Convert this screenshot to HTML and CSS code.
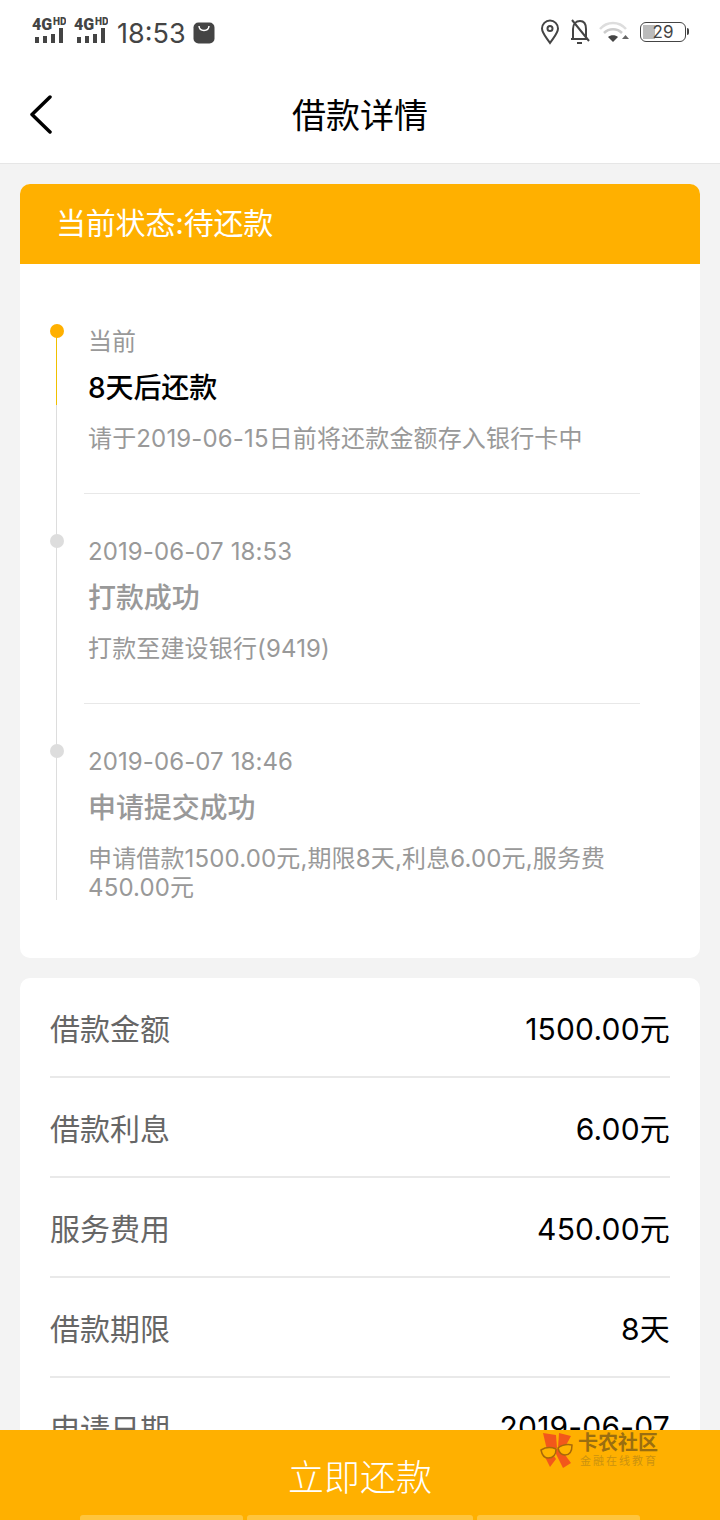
FILE: index.html
```html
<!DOCTYPE html>
<html lang="zh-CN">
<head>
<meta charset="utf-8">
<title>借款详情</title>
<link rel="stylesheet" href="styles.css">
</head>
<body>
<div class="screen">
  <div class="statusbar">
    <div class="sb-left">
      <svg class="sig" width="34" height="32" viewBox="0 -6 34 32"><text x="0" y="12" class="sig-4g">4G</text><text x="21" y="7" class="sig-hd">HD</text><rect x="3" y="19" width="4" height="6"/><rect x="11" y="18" width="4" height="7"/><rect x="19" y="16" width="4" height="9"/><rect x="27" y="10" width="4" height="15"/></svg>
      <svg class="sig" width="34" height="32" viewBox="0 -6 34 32"><text x="0" y="12" class="sig-4g">4G</text><text x="21" y="7" class="sig-hd">HD</text><rect x="3" y="19" width="4" height="6"/><rect x="11" y="18" width="4" height="7"/><rect x="19" y="16" width="4" height="9"/><rect x="27" y="10" width="4" height="15"/></svg>
      <span class="time">18:53</span>
      <svg class="bag" width="22" height="22" viewBox="0 0 22 22"><rect width="21" height="21" x="0.5" y="0.5" rx="5" fill="#444"/><path d="M6 4c.5 6 9.500 6 10 0" fill="none" stroke="#fff" stroke-width="1.500"/></svg>
    </div>
    <div class="sb-right">
      <svg width="20" height="26" viewBox="0 0 20 26"><path d="M10 24C6 18 2 14 2 9.500a8 8 0 0 1 16 0C18 14 14 18 10 24z" fill="none" stroke="#444" stroke-width="2"/><circle cx="10" cy="9.500" r="2.500" fill="none" stroke="#444" stroke-width="2"/></svg>
      <svg width="22" height="26" viewBox="0 0 22 26"><path d="M2 20h17M4 20V10c0-5 3-8 7-8s6 3 6 8v10M8 24h5M3 1l17 21" fill="none" stroke="#444" stroke-width="2"/></svg>
      <svg class="wifi" width="30" height="24" viewBox="0 0 30 24"><path d="M1 9c7-8 19-8 26 0" fill="none" stroke="#ddd" stroke-width="2.500"/><path d="M5 13c5-5 13-5 18 0" fill="none" stroke="#ccc" stroke-width="2.500"/><path d="M9 17c2.500-2.500 7.500-2.500 10 0l-5 5z" fill="#444"/><path d="M23 19l3.500-4 3.500 4z" fill="#666"/></svg>
      <div class="battery"><span class="batt-fill"></span><span class="batt-num">29</span></div>
    </div>
  </div>

  <header class="navbar">
    <svg class="back" width="24" height="40" viewBox="0 0 24 40"><path d="M21 3L3 20.500 21 38" fill="none" stroke="#000" stroke-width="3.500" stroke-linecap="round" stroke-linejoin="round"/></svg>
    <h1 class="nav-title">借款详情</h1>
  </header>

  <main class="content">
    <section class="status-card">
      <div class="status-head">当前状态:待还款</div>
      <div class="timeline">
        <div class="tl-item tl-current">
          <div class="tl-time">当前</div>
          <div class="tl-title">8天后还款</div>
          <div class="tl-desc">请于2019-06-15日前将还款金额存入银行卡中</div>
        </div>
        <div class="tl-item">
          <div class="tl-time">2019-06-07 18:53</div>
          <div class="tl-title">打款成功</div>
          <div class="tl-desc">打款至建设银行(9419)</div>
        </div>
        <div class="tl-item tl-last">
          <div class="tl-time">2019-06-07 18:46</div>
          <div class="tl-title">申请提交成功</div>
          <div class="tl-desc">申请借款1500.00元,期限8天,利息6.00元,服务费450.00元</div>
        </div>
      </div>
    </section>

    <section class="info-card">
      <div class="info-row"><span class="info-key">借款金额</span><span class="info-val">1500.00元</span></div>
      <div class="info-row"><span class="info-key">借款利息</span><span class="info-val">6.00元</span></div>
      <div class="info-row"><span class="info-key">服务费用</span><span class="info-val">450.00元</span></div>
      <div class="info-row"><span class="info-key">借款期限</span><span class="info-val">8天</span></div>
      <div class="info-row"><span class="info-key">申请日期</span><span class="info-val">2019-06-07</span></div>
    </section>
  </main>

  <footer class="footer">
    <div class="repay">立即还款</div>
    <div class="slivers"><span class="sliver s1"></span><span class="sliver s2"></span><span class="sliver s3"></span></div>
    <div class="watermark">
      <svg class="wm-logo" width="36" height="36" viewBox="0 0 36 36"><path d="M4 1l13 2 1 13-10 2z" fill="#f2581b"/><path d="M20 1l12 3-7 13-6-1z" fill="#f2581b"/><path d="M15 18l6-2 11 15-8 5z" fill="#f2581b"/><path d="M12 20l5 7-6 8-5-10z" fill="#f2581b"/><path d="M2 18c5-3 10-3 15-1 0 6-3 9-8 9-4 0-6-3-7-8z" fill="#ffb400" stroke="#a8690a" stroke-width="1.500"/><path d="M19 16c4-3 9-4 14-3 0 6-2 10-7 10-4 0-6-3-7-7z" fill="#ffb400" stroke="#a8690a" stroke-width="1.500"/></svg>
      <div class="wm-text"><div class="wm-name">卡农社区</div><div class="wm-sub">金融在线教育</div></div>
    </div>
  </footer>
</div>
</body>
</html>
```
FILE: styles.css
```css
* { box-sizing: border-box; }
html, body { margin: 0; padding: 0; }
body { font-family: Inter, "Noto Sans CJK SC", sans-serif; background: #f3f3f3; }
.screen { position: relative; width: 720px; height: 1520px; overflow: hidden; background: #f3f3f3; }

.statusbar { height: 64px; background: #fff; display: flex; justify-content: space-between; align-items: center; padding: 0 34px 2px 32px; }
.sb-left, .sb-right { display: flex; align-items: center; }
.sb-left { gap: 8px; }
.sb-right { gap: 9px; margin-top: 2px; }
.wifi { margin-left: -1px; margin-right: 2px; }
.sig { fill: #444; margin-top: -6px; }
.sig-4g { font: 900 16px Roboto, sans-serif; }
.sig-hd { font: 900 10px Roboto, sans-serif; }
.time { font-size: 27px; color: #444; margin: 4px 0 0 1px; }
.bag { margin-top: 4px; margin-left: -1px; }
.battery { position: relative; width: 46px; height: 20px; border: 1.500px solid #444; border-radius: 6px; display: flex; align-items: center; justify-content: center; }
.battery::after { content: ""; position: absolute; right: -4px; top: 5px; width: 2px; height: 7px; background: #444; border-radius: 0 2px 2px 0; }
.batt-fill { position: absolute; left: 2px; top: 2px; bottom: 2px; width: 12px; background: #bbb; }
.batt-num { position: relative; font-size: 17px; color: #444; }

.navbar { position: relative; height: 100px; background: #fff; border-bottom: 1px solid #e6e6e6; display: flex; align-items: center; justify-content: center; }
.back { position: absolute; left: 29px; top: 30px; }
.nav-title { margin: 0; font-size: 34px; font-weight: 400; color: #000; }

.content { padding: 20px 20px 0; display: flex; flex-direction: column; gap: 20px; }

.status-card { background: #fff; border-radius: 10px; overflow: hidden; }
.status-head { height: 80px; background: #ffb000; color: #fff; font-size: 30px; line-height: 78px; padding-left: 36px; letter-spacing: -0.2px; }
.timeline { padding: 60px 60px 58px 68px; position: relative; }
.tl-item { position: relative; height: 210px; }
.tl-item::before { content: ""; position: absolute; left: -38px; top: 0; width: 14px; height: 14px; border-radius: 50%; background: #ddd; z-index: 1; }
.tl-item::after { content: ""; position: absolute; left: -32px; top: 7px; bottom: -7px; width: 1px; background: #ddd; }
.tl-current::before { background: #ffb000; }
.tl-current::after { background: linear-gradient(#f0c000 0 74px, #ddd 74px); }
.tl-last { height: 156px; }
.tl-last::after { bottom: 0; }
.tl-time { font-size: 24px; line-height: 35px; color: #999; letter-spacing: 0.1px; }
.tl-title { font-size: 28px; font-weight: 500; line-height: 40px; margin-top: 9px; color: #999; letter-spacing: -0.1px; }
.tl-current .tl-title { color: #000; }
.tl-desc { font-size: 24px; line-height: 29px; color: #999; margin-top: 16px; letter-spacing: 0.15px; }
.tl-item:not(.tl-last) .tl-desc { padding-bottom: 40px; border-bottom: 1px solid #e8e8e8; margin-left: -4px; padding-left: 4px; }

.info-card { background: #fff; border-radius: 10px; padding: 0 30px; }
.info-row { height: 100px; display: flex; justify-content: space-between; align-items: center; border-bottom: 2px solid #e9e9e9; }
.info-key { font-size: 30px; color: #666; }
.info-val { font-size: 30px; color: #000; letter-spacing: 0.2px; }

.footer { position: absolute; left: 0; right: 0; bottom: 0; height: 90px; background: #ffb000; }
.repay { color: #fff; font-size: 36px; font-weight: 300; text-align: center; line-height: 96px; }
.slivers { position: absolute; left: 80px; bottom: 0; display: flex; gap: 4px; }
.sliver { height: 5px; background: #ffc53d; border-radius: 3px 3px 0 0; }
.s1 { width: 163px; }
.s2 { width: 226px; }
.s3 { width: 163px; }
.watermark { position: absolute; left: 539px; top: 2px; display: flex; gap: 3px; }
.wm-text { display: flex; flex-direction: column; align-items: flex-start; }
.wm-name { font-size: 20px; font-weight: 700; line-height: 22px; color: #9a6e10; }
.wm-sub { font-size: 11px; line-height: 14px; letter-spacing: 2px; margin-left: 2px; color: #cb9210; }
```
